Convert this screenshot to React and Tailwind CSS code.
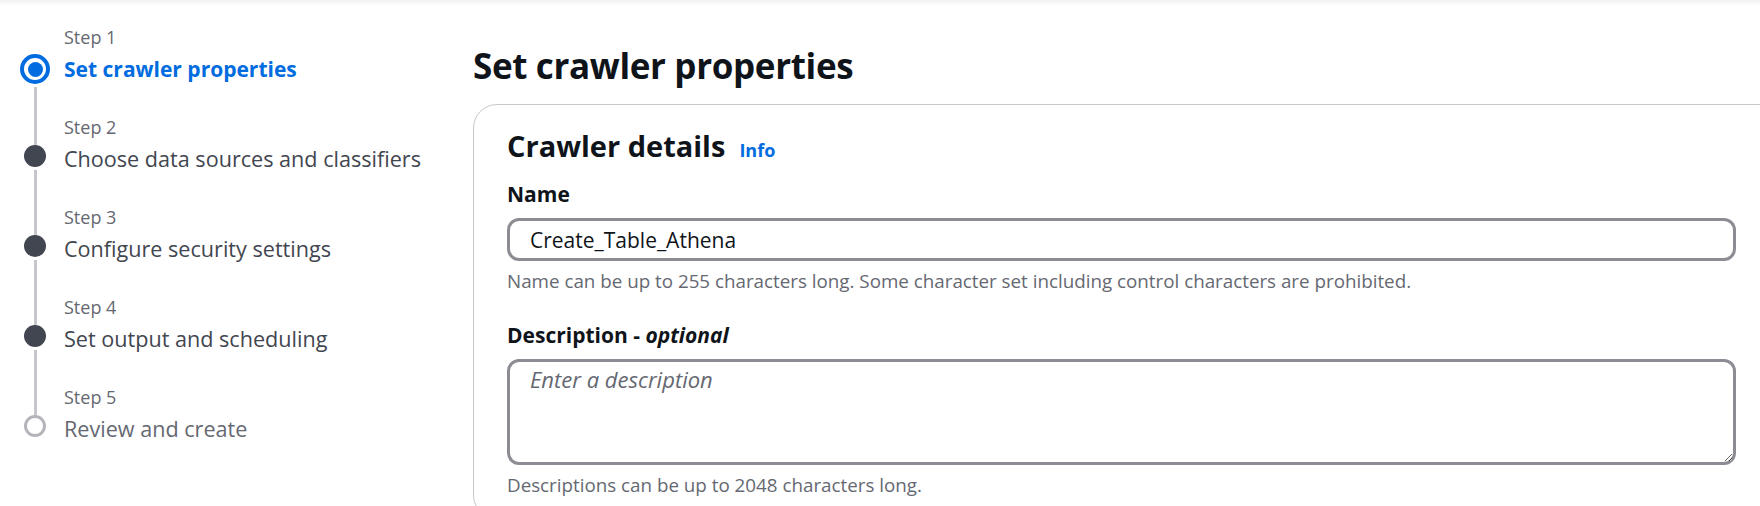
import { useState } from 'react'

const STEPS = [
  { label: 'Step 1', title: 'Set crawler properties', state: 'active' },
  { label: 'Step 2', title: 'Choose data sources and classifiers', state: 'done' },
  { label: 'Step 3', title: 'Configure security settings', state: 'done' },
  { label: 'Step 4', title: 'Set output and scheduling', state: 'done' },
  { label: 'Step 5', title: 'Review and create', state: 'disabled' },
]

export default function App() {
  const [name, setName] = useState('Create_Table_Athena')
  const [description, setDescription] = useState('')

  return (
    <div
      className="flex h-[506px] w-[1760px] overflow-hidden bg-white shadow-[inset_0_5px_5px_-3px_rgba(0,0,0,0.07)]"
      style={{ fontFamily: '"Open Sans", "Noto Sans", sans-serif' }}
    >
      <nav className="w-[473px] shrink-0 pl-[20px] pt-[25px]">
        <ol>
          {STEPS.map((step, i) => (
            <StepItem key={step.label} step={step} first={i === 0} last={i === STEPS.length - 1} />
          ))}
        </ol>
      </nav>

      <main className="w-[1400px] shrink-0 pt-[44px]">
        <h1 className="text-[35px] font-bold leading-[44px] tracking-[-0.01em] text-[#0f141a]">
          Set crawler properties
        </h1>

        <section className="mt-[16px] rounded-[24px] border border-[#c6c6cd] pb-[21px] pl-[33px] pt-[23px]">
          <div className="w-[1229px]">
            <div className="flex items-baseline gap-[14px]">
              <h2 className="text-[29px] font-bold leading-[36px] text-[#0f141a]">Crawler details</h2>
              <a className="text-[18px] font-bold leading-[24px] text-[#006ce0]">Info</a>
            </div>

            <Field
              label="Name"
              className="mt-[15px]"
              hint="Name can be up to 255 characters long. Some character set including control characters are prohibited."
            >
              <input
                value={name}
                onChange={(e) => setName(e.target.value)}
                className="block h-[43px] w-full rounded-[12px] border-[3px] border-[#8c8c94] px-[20px] text-[21px] leading-[30px] text-[#0f141a] outline-none"
              />
            </Field>

            <Field
              label={
                <>
                  Description - <i>optional</i>
                </>
              }
              className="mt-[27px]"
              hint="Descriptions can be up to 2048 characters long."
            >
              <textarea
                value={description}
                onChange={(e) => setDescription(e.target.value)}
                placeholder="Enter a description"
                className="block h-[106px] w-full rounded-[12px] border-[3px] border-[#8c8c94] px-[20px] pt-[2px] text-[21px] leading-[30px] text-[#0f141a] outline-none placeholder:text-[22px] placeholder:italic placeholder:text-[#656871]"
              />
            </Field>
          </div>
        </section>
      </main>
    </div>
  )
}

function StepItem({ step, first, last }) {
  const titleClass =
    step.state === 'active'
      ? 'text-[21px] font-bold text-[#006ce0]'
      : step.state === 'disabled'
        ? 'text-[21.6px] text-[#656871]'
        : 'text-[21.6px] text-[#424650]'

  return (
    <li className={`flex ${last ? '' : 'h-[90px]'}`}>
      <div className="flex w-[30px] shrink-0 flex-col items-center">
        {first ? <div className="h-[29px]" /> : <div className="h-[30px] w-[3px] bg-[#c6c6cd]" />}
        <StepMarker state={step.state} />
        {!last && <div className="mt-[3px] w-[3px] flex-1 bg-[#c6c6cd]" />}
      </div>
      <div className="ml-[14px]">
        <div className="text-[18px] leading-[24px] text-[#656871]">{step.label}</div>
        <div className={`mt-[5px] whitespace-nowrap leading-[30px] ${titleClass}`}>{step.title}</div>
      </div>
    </li>
  )
}

function StepMarker({ state }) {
  if (state === 'active') {
    return (
      <div className="flex h-[30px] w-[30px] items-center justify-center rounded-full border-[4px] border-[#006ce0]">
        <div className="h-[15px] w-[15px] rounded-full bg-[#006ce0]" />
      </div>
    )
  }
  if (state === 'disabled') {
    return <div className="h-[22px] w-[22px] rounded-full border-[3px] border-[#b4b4bb]" />
  }
  return <div className="h-[22px] w-[22px] rounded-full bg-[#424650]" />
}

function Field({ label, hint, className, children }) {
  return (
    <div className={className}>
      <label className="block text-[21px] font-bold leading-[30px] text-[#0f141a]">{label}</label>
      <div className="mt-[9px]">{children}</div>
      <div className="mt-[8px] text-[18.8px] leading-[24px] text-[#656871]">{hint}</div>
    </div>
  )
}
